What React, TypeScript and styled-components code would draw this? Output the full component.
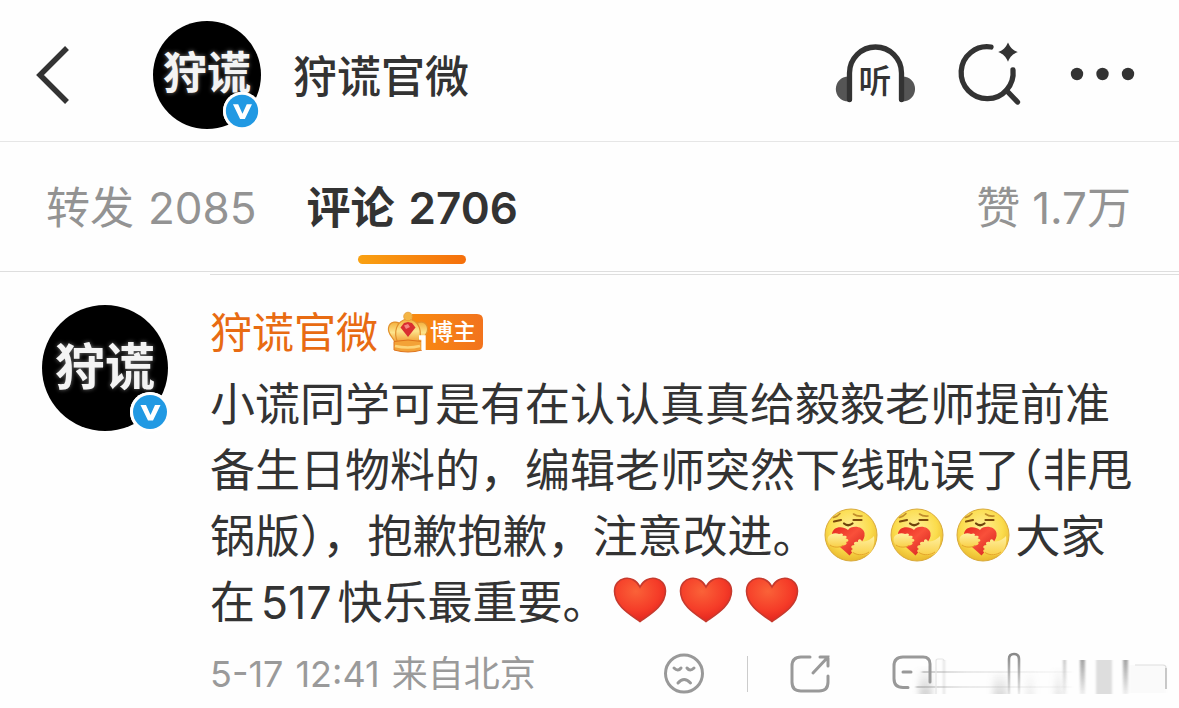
import React from "react";
import styled, { createGlobalStyle } from "styled-components";

const Global = createGlobalStyle`
  * { box-sizing: border-box; }
  body {
    margin: 0;
    background: #fefefe;
    color: #333;
    font-family: Inter, "Noto Sans CJK SC", sans-serif;
  }
  button { border: 0; padding: 0; background: none; color: inherit; font: inherit; cursor: pointer; }
  a { color: inherit; text-decoration: none; }
  svg { display: block; flex: none; overflow: visible; }
`;

const Page = styled.div`
  min-height: 100vh;
  overflow: hidden;
`;

const TopBar = styled.header`
  display: flex;
  align-items: center;
  height: 142px;
  padding: 16px 44px 8px 36px;
  border-bottom: 1px solid #e6e6e6;
`;

const BackButton = styled.button`
  margin-right: 83px;
`;

const Title = styled.h1`
  flex: 1;
  margin: 0 0 0 32px;
  padding-top: 4px;
  font-size: 44px;
  line-height: 60px;
  font-weight: 500;
`;

const Actions = styled.div`
  display: flex;
  align-items: center;
  gap: 42px;
`;

const AvatarBox = styled.a<{ $size: number }>`
  position: relative;
  display: flex;
  flex: none;
  align-items: center;
  justify-content: center;
  width: ${(p) => p.$size}px;
  height: ${(p) => p.$size}px;
  padding-bottom: 10px;
  border-radius: 50%;
  background: #000;
`;

const AvatarText = styled.span<{ $size: number }>`
  color: #f4f4f4;
  font-family: "Noto Sans CJK SC", sans-serif;
  font-size: ${(p) => p.$size}px;
  line-height: 1;
  font-weight: 700;
  white-space: nowrap;
  text-shadow: 0 0 4px #777;
`;

const Verified = styled.span<{ $right: number }>`
  position: absolute;
  right: ${(p) => p.$right}px;
  bottom: -1px;
  border-radius: 50%;
  background: #fff;
`;

const Tabs = styled.nav`
  display: flex;
  align-items: stretch;
  gap: 50px;
  height: 130px;
  padding: 2px 48px 0 46px;
  border-bottom: 1px solid #dedede;
`;

const Tab = styled.button<{ $active?: boolean; $end?: boolean }>`
  position: relative;
  display: flex;
  align-items: center;
  gap: ${(p) => (p.$end ? 12 : 14)}px;
  margin-left: ${(p) => (p.$end ? "auto" : "0")};
  color: ${(p) => (p.$active ? "#333" : "#939393")};
  font-size: 44px;
  line-height: 60px;
  font-weight: ${(p) => (p.$active ? 600 : 400)};

  &::after {
    content: "";
    display: ${(p) => (p.$active ? "block" : "none")};
    position: absolute;
    left: 50%;
    bottom: 7px;
    width: 108px;
    height: 9px;
    margin-left: -54px;
    border-radius: 5px;
    background: linear-gradient(90deg, #f9a112, #f56f0c);
  }
`;

const Comment = styled.article`
  display: flex;
  align-items: flex-start;
  gap: 42px;
  padding: 2px 0 0 42px;
`;

const AvatarColumn = styled.div`
  padding-top: 31px;
`;

const Body = styled.div`
  flex: 1;
  min-width: 0;
  border-top: 1px solid #dedede;
`;

const NameRow = styled.div`
  display: flex;
  align-items: center;
  gap: 10px;
  height: 97px;
  padding-top: 19px;
`;

const Name = styled.a`
  && { color: #e86b12; }
  font-size: 42px;
  line-height: 60px;
`;

const Message = styled.p`
  margin: 0;
  padding-right: 40px;
  font-size: 45px;
  line-height: 66px;
  text-autospace: normal;
`;

const Half = styled.span`
  display: inline-block;
  font-feature-settings: "halt";
`;

const Emoji = styled.span`
  display: inline-block;
  width: 54px;
  height: 54px;
  margin: 0 6px;
  vertical-align: -9px;
`;

const Meta = styled.footer`
  display: flex;
  align-items: center;
  height: 76px;
  padding-right: 7px;
  color: #9a9a9a;
`;

const Stamp = styled.div`
  display: flex;
  flex: 1;
  gap: 12px;
  font-size: 36px;
  line-height: 52px;
  white-space: nowrap;
`;

const Rule = styled.span`
  width: 1px;
  height: 36px;
  margin: 0 42px 0 43px;
  background: #ccc;
`;

const Tail = styled.div`
  position: relative;
  display: flex;
  gap: 70px;
  width: 280px;
  margin-left: 62px;
`;

const Smear = styled.span`
  position: absolute;
  left: 0;
  top: 0;
  pointer-events: none;
`;

function VBadge({ size, right }: { size: number; right: number }) {
  return (
    <Verified $right={right}>
      <svg width={size} height={size} viewBox="0 0 40 40" aria-label="认证">
        <circle cx="20" cy="20" r="20" fill="#fff" />
        <circle cx="20" cy="20" r="17" fill="#2199e3" />
        <path d="M10.500 13h5.500l4.500 10L25 13h5.500l-7.500 15.500h-5z" fill="#fff" />
      </svg>
    </Verified>
  );
}

function Avatar({ size, text, badge, right }: { size: number; text: number; badge: number; right: number }) {
  return (
    <AvatarBox $size={size} href="#profile" aria-label="狩谎官微">
      <AvatarText $size={text}>狩谎</AvatarText>
      <VBadge size={badge} right={right} />
    </AvatarBox>
  );
}

function ListenIcon() {
  return (
    <svg width="80" height="64" viewBox="0 0 80 64">
      <path d="M14 33.500C-3.500 33.500-3.500 58.500 14 58.500zM67 33.500C84.500 33.500 84.500 58.500 67 58.500z" fill="#555" />
      <path d="M14.500 56.500V30a26 26 0 0 1 52 0v26.500" fill="none" stroke="#333" strokeWidth="5.300" strokeLinecap="round" />
      <text x="40" y="50" textAnchor="middle" fontSize="33" fontWeight="500" fill="#333" fontFamily="'Noto Sans CJK SC', sans-serif">听</text>
    </svg>
  );
}

function SearchIcon() {
  return (
    <svg width="64" height="64" viewBox="0 0 64 64" fill="none" stroke="#333" strokeWidth="5.300" strokeLinecap="round">
      <path d="M34 4A26 26 0 1 0 56 27" />
      <path d="M49.500 47.500 60.500 59" />
      <path d="M51-.5c2.400 5.400 4.600 7.300 9.800 9.600-5.200 2.300-7.400 4.200-9.800 9.600-2.400-5.400-4.600-7.300-9.800-9.600 5.200-2.300 7.400-4.200 9.800-9.600z" fill="#333" stroke="none" />
    </svg>
  );
}

function OwnerBadge() {
  return (
    <svg width="97" height="42" viewBox="0 0 97 42" role="img" aria-label="博主">
      <defs>
        <linearGradient id="tag" x1="0" x2="1" y1="0" y2="0">
          <stop offset="0" stopColor="#f98a10" />
          <stop offset="1" stopColor="#f2731d" />
        </linearGradient>
        <linearGradient id="gold" x1="0" x2="0" y1="0" y2="1">
          <stop offset="0" stopColor="#f4b03c" />
          <stop offset=".5" stopColor="#fde48c" />
          <stop offset="1" stopColor="#f0982c" />
        </linearGradient>
      </defs>
      <path d="M24 2h65q6 0 6 6v24q0 6-6 6H24z" fill="url(#tag)" />
      <g fill="url(#gold)" stroke="#e2902c" strokeWidth="1.200">
        <path d="M7 31C6 25-.5 23 .5 16 1.500 9 10 8.500 13 13l4 18z" />
        <path d="M33 31c1-6 7.500-8 6.500-15C38.500 9 30 8.500 27 13l-4 18z" />
        <path d="M10 31C5 21 8 8 20 7c12 1 15 14 10 24z" />
      </g>
      <circle cx="20" cy="4.500" r="4.300" fill="#f4b544" stroke="#e59a34" strokeWidth=".8" />
      <path d="M6 29.500q14-3 28 0v8.500q-14 4-28 0z" fill="#f3a237" stroke="#df741d" />
      <path d="M7 34q13 3 25 0" fill="none" stroke="#fdd477" strokeWidth="2.600" />
      <path d="m16 11 4-1 4 1 3.500 4.500L20 25l-7.500-9.500z" fill="#d92f31" />
      <path d="m16 13.500 4-1.500 2 3-4 2z" fill="#f58580" />
      <path d="M31 25.500h4.500V38" fill="none" stroke="#fff" strokeWidth="4.400" />
      <text x="42" y="28" fontSize="23" fontWeight="500" fill="#fff" fontFamily="'Noto Sans CJK SC', sans-serif">博主</text>
    </svg>
  );
}

function HugFace() {
  return (
    <Emoji role="img" aria-label="抱抱">
      <svg width="54" height="54" viewBox="0 0 54 54">
        <defs>
          <radialGradient id="skin" cx=".48" cy=".38" r=".62">
            <stop offset="0" stopColor="#fff09a" />
            <stop offset=".65" stopColor="#fbdc4c" />
            <stop offset="1" stopColor="#e9b82d" />
          </radialGradient>
          <linearGradient id="love" x1="0" x2="1" y1="0" y2="1">
            <stop offset="0" stopColor="#e5281f" />
            <stop offset=".45" stopColor="#f9503a" />
            <stop offset="1" stopColor="#cf1c1a" />
          </linearGradient>
          <linearGradient id="arm" x1="0" x2="0" y1="0" y2="1">
            <stop offset="0" stopColor="#fff0a0" />
            <stop offset="1" stopColor="#f9d048" />
          </linearGradient>
        </defs>
        <circle cx="27" cy="27" r="26" fill="url(#skin)" stroke="#d9aa3c" />
        <g fill="none" strokeLinecap="round">
          <path d="M10 13.500l7-1.500M29.500 12h8" stroke="#7b4a0c" strokeWidth="2.200" />
          <path d="M20 15.500q4 3.500 8.500 0" stroke="#70430c" strokeWidth="2.200" />
          <path d="M9.500 9.500q4-1 6.500-4M29.500 6q3.500 2.500 8.500 2" stroke="#c08c2b" strokeWidth="1.600" />
        </g>
        <path d="M25.500 47.500C19 41 8 34 8 26.500 8 19 18 17 24 22c3-5 15-4.500 16.500 3 1.500 8-9 15-15 22.500z" fill="url(#love)" />
        <path d="M4 29c3-4 8-4.500 11-3 3-1.500 5 0 3.500 2 4-1 5.500 1 3 2.500 4 .5 3.500 3.500.5 3.500 2 2-1 3.500-3.500 3.500-4 2.500-10 2-13-1-2-2.500-2.500-5-1.500-7.500z" fill="url(#arm)" />
        <path d="M50 28c-4 4-7 5.500-12 5.500-1-3-4.500-3-4 .5-3.500-1-5 1-3.500 3-4 0-4 3-1.500 4-3 1-2 4 1.500 4 4 3.500 12 3 15.500 0 3.500-4 5-11 4-17z" fill="url(#arm)" />
        <path d="M6 37c3 2.500 9 3 13 .5M29 44.500c5 3.500 12 2.500 16-.5" fill="none" stroke="#e4a52c" strokeWidth="1" />
      </svg>
    </Emoji>
  );
}

function Heart() {
  return (
    <Emoji role="img" aria-label="心">
      <svg width="54" height="54" viewBox="0 0 54 54">
        <defs>
          <radialGradient id="heart" cx=".42" cy=".3" r=".75">
            <stop offset="0" stopColor="#fa6238" />
            <stop offset=".6" stopColor="#f53c28" />
            <stop offset="1" stopColor="#df211d" />
          </radialGradient>
        </defs>
        <path d="M27 47.500C18 41 1.500 32 1.500 17 1.500 3 20-1 27 13 34-1 52.500 3 52.500 17c0 15-16.500 24-25.500 30.500z" fill="url(#heart)" stroke="#c63a2e" strokeWidth="1.600" />
      </svg>
    </Emoji>
  );
}

const line = { fill: "none", stroke: "#999", strokeWidth: 3, strokeLinecap: "round" as const };

function SmearArt() {
  return (
    <svg width="280" height="44" viewBox="0 0 280 44" aria-hidden="true">
      <defs>
        <linearGradient id="fadeDown" x1="0" x2="0" y1="0" y2="1">
          <stop offset="0" stopColor="#999" stopOpacity="0" />
          <stop offset="1" stopColor="#999" stopOpacity=".42" />
        </linearGradient>
        <linearGradient id="fadeUp" x1="0" x2="0" y1="0" y2="1">
          <stop offset="0" stopColor="#888" stopOpacity=".75" />
          <stop offset="1" stopColor="#888" stopOpacity=".12" />
        </linearGradient>
        <linearGradient id="across" x1="0" x2="1" y1="0" y2="0">
          <stop offset="0" stopColor="#999" stopOpacity=".5" />
          <stop offset=".3" stopColor="#999" stopOpacity=".2" />
          <stop offset="1" stopColor="#999" stopOpacity=".04" />
        </linearGradient>
        <filter id="soft" x="-20%" y="-10%" width="140%" height="120%">
          <feGaussianBlur stdDeviation="1.200 .6" />
        </filter>
        <filter id="softer" x="-60%" y="-10%" width="220%" height="120%">
          <feGaussianBlur stdDeviation="3 .5" />
        </filter>
      </defs>
      <g filter="url(#softer)">
        <rect x="27" y="14" width="13" height="28" fill="url(#fadeDown)" />
        <rect x="101" y="18" width="14" height="24" fill="url(#fadeDown)" opacity=".8" />
        <rect x="134" y="18" width="8" height="24" fill="url(#fadeDown)" opacity=".4" />
        <rect x="163" y="14" width="7" height="28" fill="url(#fadeDown)" opacity=".6" />
      </g>
      <g filter="url(#soft)">
        <rect x="51" y="8" width="2" height="34" fill="#999" opacity=".28" />
        <rect x="30" y="19" width="150" height="2" fill="url(#across)" />
        <rect x="24" y="34" width="156" height="2" fill="url(#across)" />
        <rect x="171" y="8" width="3" height="34" fill="url(#fadeUp)" opacity=".6" />
        <rect x="188" y="8" width="5" height="34" fill="url(#fadeUp)" />
        <rect x="204" y="8" width="16" height="34" fill="#999" opacity=".32" />
        <rect x="231" y="8" width="5" height="34" fill="url(#fadeUp)" />
        <rect x="237" y="13" width="37" height="28" fill="#999" opacity=".04" />
      </g>
      <path d="M44 42V9q0-2 2-2h4q2 0 2 2" fill="none" stroke="#e4e4e4" strokeWidth="1.200" />
      <path d="M243 13h28q3 0 3 3" fill="none" stroke="#ddd" strokeWidth="1.200" />
      <path d="M274 16v21" fill="none" stroke="#bbb" strokeWidth="1.600" />
    </svg>
  );
}

export default function App() {
  return (
    <Page>
      <Global />
      <TopBar>
        <BackButton aria-label="返回">
          <svg width="34" height="58" viewBox="0 0 34 58">
            <path d="M31 2 4 29l27 27" fill="none" stroke="#333" strokeWidth="5.500" />
          </svg>
        </BackButton>
        <Avatar size={108} text={44} badge={38} right={0} />
        <Title>狩谎官微</Title>
        <Actions>
          <button aria-label="听"><ListenIcon /></button>
          <button aria-label="搜索"><SearchIcon /></button>
          <button aria-label="更多">
            <svg width="72" height="14" viewBox="0 0 72 14" fill="#333">
              <circle cx="14" cy="6" r="6.200" />
              <circle cx="39.500" cy="6" r="6.200" />
              <circle cx="65" cy="6" r="6.200" />
            </svg>
          </button>
        </Actions>
      </TopBar>
      <Tabs>
        <Tab><span>转发</span><span>2085</span></Tab>
        <Tab $active><span>评论</span><span>2706</span></Tab>
        <Tab $end><span>赞</span><span>1.7万</span></Tab>
      </Tabs>
      <Comment>
        <AvatarColumn>
          <Avatar size={126} text={50} badge={40} right={-2} />
        </AvatarColumn>
        <Body>
          <NameRow>
            <Name href="#profile">狩谎官微</Name>
            <OwnerBadge />
          </NameRow>
          <Message>
            小谎同学可是有在认认真真给毅毅老师提前准备生日物料的，编辑老师突然下线耽误了<Half>（</Half>非甩锅版），抱歉抱歉，注意改进。<HugFace /><HugFace /><HugFace />大家在517快乐最重要。<Heart /><Heart /><Heart />
          </Message>
          <Meta>
            <Stamp>
              <span>5-17</span>
              <span>12:41</span>
              <span>来自北京</span>
            </Stamp>
            <button aria-label="不喜欢">
              <svg width="40" height="42" viewBox="0 0 40 42" {...line}>
                <circle cx="20" cy="20.500" r="18.500" />
                <path d="M10 15q4 4 7 0M23 15q3 4 7 0M14 30q6-7 12.500 0" />
              </svg>
            </button>
            <Rule />
            <button aria-label="转发">
              <svg width="40" height="42" viewBox="0 0 40 42" {...line}>
                <path d="M20 4h-9q-9 0-9 9v16q0 9 9 9h18q9 0 9-9v-6M30 4h8v9M38 4 23 20" />
              </svg>
            </button>
            <Tail>
              <button aria-label="评论">
                <svg width="40" height="44" viewBox="0 0 40 44" {...line}>
                  <path d="M16 35.500h-5q-9 0-9-9V14q0-9 9-9h20q7 0 7 7v18M11 20h8" />
                </svg>
              </button>
              <button aria-label="赞">
                <svg width="40" height="44" viewBox="0 0 40 44" fill="none">
                  <defs>
                    <linearGradient id="thumb" x1="0" x2="0" y1="0" y2="1">
                      <stop offset="0" stopColor="#888" />
                      <stop offset="1" stopColor="#888" stopOpacity=".15" />
                    </linearGradient>
                  </defs>
                  <path d="M7 42V7q0-5 5-5t5 5v35" stroke="url(#thumb)" strokeWidth="2.600" />
                </svg>
              </button>
              <Smear><SmearArt /></Smear>
            </Tail>
          </Meta>
        </Body>
      </Comment>
    </Page>
  );
}
